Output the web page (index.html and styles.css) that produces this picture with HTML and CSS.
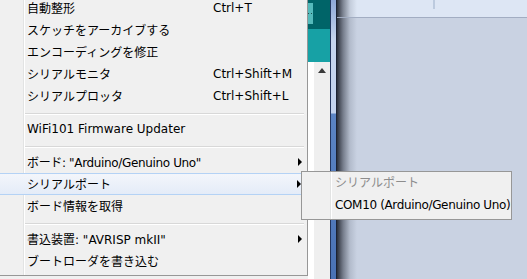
FILE: index.html
```html
<!DOCTYPE html>
<html>
<head>
  <title>ツール メニュー</title>
  <link rel="stylesheet" href="styles.css">
</head>
<body>
  <div class="desk">
    <div class="menu">
      <div class="item"><span class="label">自動整形</span><span class="key">Ctrl+T</span></div>
      <div class="item"><span class="label">スケッチをアーカイブする</span></div>
      <div class="item"><span class="label">エンコーディングを修正</span></div>
      <div class="item"><span class="label">シリアルモニタ</span><span class="key">Ctrl+Shift+M</span></div>
      <div class="item"><span class="label">シリアルプロッタ</span><span class="key">Ctrl+Shift+L</span></div>
      <div class="sep"></div>
      <div class="item"><span class="label">WiFi101 Firmware Updater</span></div>
      <div class="sep"></div>
      <div class="item"><span class="label wide tight">ボード: "Arduino/Genuino Uno"</span><span class="arrow"></span></div>
      <div class="item active"><span class="label wide">シリアルポート</span><span class="arrow"></span></div>
      <div class="item"><span class="label">ボード情報を取得</span></div>
      <div class="sep"></div>
      <div class="item"><span class="label wide">書込装置: "AVRISP mkII"</span><span class="arrow"></span></div>
      <div class="item"><span class="label">ブートローダを書き込む</span></div>
    </div>

    <div class="ide">
      <div class="ide-top"><span class="ide-btn"></span></div>
      <div class="ide-bar"></div>
      <div class="ide-body">
        <div class="ide-edge"></div>
        <div class="ide-gutter"><span class="up"></span></div>
      </div>
    </div>

    <div class="scroll"></div>

    <div class="win">
      <div class="win-top"><span class="mark"></span></div>
      <div class="win-body"></div>
    </div>

    <div class="submenu">
      <div class="sub-item disabled">シリアルポート</div>
      <div class="sub-item tight">COM10 (Arduino/Genuino Uno)</div>
    </div>
  </div>
</body>
</html>
```

FILE: styles.css
```css
body, html {
  height: 100%;
  margin: 0;
}

body {
  font-family: "DejaVu Sans", "Noto Sans CJK JP", sans-serif;
  font-size: 12px;
  color: #000;
  overflow: hidden;
}

.desk {
  display: flex;
  position: relative;
  height: 279px;
  background: #f0f0f0;
  overflow: hidden;
}

/* main menu */
.menu {
  align-self: flex-start;
  width: 307px;
  margin-top: -3px;
  padding-bottom: 3px;
  border-right: 1px solid #979797;
  border-bottom: 1px solid #979797;
  background: linear-gradient(to right, #f0f0f0 23px, #e2e3e3 23px, #e2e3e3 24px, #fff 24px, #fff 25px, #f0f0f0 25px);
}

.item {
  display: flex;
  align-items: center;
  height: 22px;
  margin-right: 3px;
  padding-left: 27px;
  padding-bottom: 1px;
  box-sizing: border-box;
  white-space: nowrap;
}

.item .label {
  width: 186px;
}

.item .label.wide {
  flex: 1;
}

.tight {
  letter-spacing: -0.35px;
}

.item.active {
  border-top: 1px solid #b4d2f5;
  border-bottom: 1px solid #b4d2f5;
  border-right: 1px solid #b4d2f5;
  border-radius: 0 2px 2px 0;
  background: linear-gradient(#f3f6fb, #e4ecf8);
}

.arrow {
  width: 0;
  height: 0;
  margin-right: 2px;
  border-left: 4px solid #000;
  border-top: 4px solid transparent;
  border-bottom: 4px solid transparent;
}

.sep {
  height: 11px;
  margin: 0 3px 0 25px;
  background: linear-gradient(transparent 6px, #d8d8d8 6px, #d8d8d8 7px, #fff 7px, #fff 8px, transparent 8px);
}

/* IDE window behind */
.ide {
  display: flex;
  flex-direction: column;
  width: 22px;
}

.ide-top {
  height: 29px;
  padding-top: 3px;
  box-sizing: border-box;
  background: #006468;
}

.ide-btn {
  display: block;
  width: 5px;
  height: 21px;
  background:
    linear-gradient(transparent 10px, #1d4c4d 10px, #1d4c4d 11px, transparent 11px) 0 0 / 1px 21px no-repeat,
    linear-gradient(transparent 10px, #1d4c4d 10px, #1d4c4d 11px, transparent 11px) 3px 0 / 1px 21px no-repeat,
    #55babb;
}

.ide-bar {
  height: 33px;
  background: #17a1a5;
}

.ide-body {
  display: flex;
  flex: 1;
}

.ide-edge {
  width: 6px;
  background: #fff;
}

.ide-gutter {
  flex: 1;
  display: flex;
  justify-content: center;
  padding-top: 6px;
  background: #efefef;
}

.up {
  width: 0;
  height: 0;
  border-left: 4px solid transparent;
  border-right: 4px solid transparent;
  border-bottom: 5px solid #3a3a3a;
}

.scroll {
  width: 5px;
  border-left: 1px solid #23355e;
  border-right: 1px solid #1b2233;
  background: linear-gradient(#8ea7d6, #c6d5ee 40px, #c3d3ee 113px, #5b84c4 114px, #4a72b5);
}

.win {
  flex: 1;
  display: flex;
  flex-direction: column;
}

.win-top {
  height: 17px;
  border-bottom: 1px solid #a2adc2;
  background:
    linear-gradient(to right, rgba(35, 39, 50, 0.95), rgba(60, 66, 80, 0.6) 6px, rgba(90, 98, 115, 0.2) 13px, rgba(90, 98, 115, 0) 20px),
    #dde6f4;
}

.mark {
  display: block;
  width: 2px;
  height: 9px;
  margin-left: 96px;
  background: #bccade;
}

.win-body {
  flex: 1;
  background:
    linear-gradient(to right, rgba(35, 39, 50, 0.95), rgba(60, 66, 80, 0.6) 6px, rgba(90, 98, 115, 0.2) 13px, rgba(90, 98, 115, 0) 20px),
    #c9d2e2;
}

/* popup submenu */
.submenu {
  position: absolute;
  left: 301px;
  top: 171px;
  width: 209px;
  padding: 1px 0 2px;
  border: 1px solid #979797;
  background: linear-gradient(to right, #f0f0f0 28px, #e2e3e3 28px, #e2e3e3 29px, #fff 29px, #fff 30px, #f0f0f0 30px);
}

.sub-item {
  height: 22px;
  line-height: 21px;
  padding-left: 33px;
  white-space: nowrap;
}

.sub-item.disabled {
  color: #8d8d8d;
}
```
